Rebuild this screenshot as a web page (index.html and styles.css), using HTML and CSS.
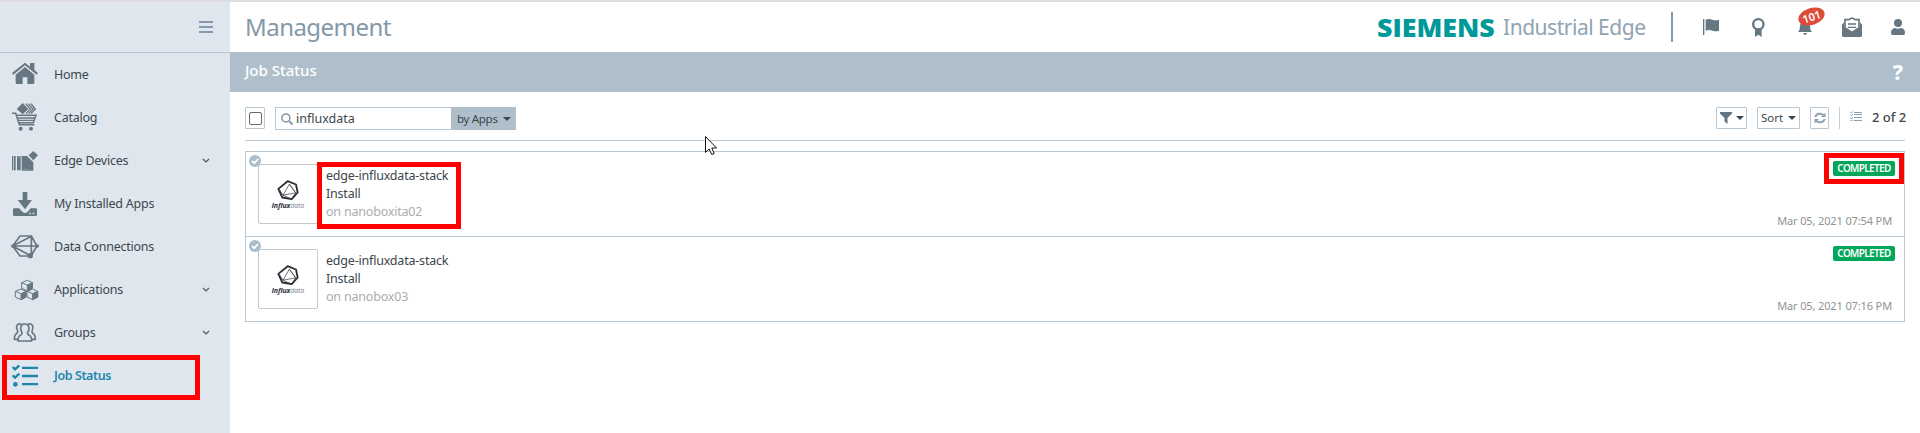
FILE: index.html
```html
<!DOCTYPE html>
<html lang="en">
<head>
<meta charset="utf-8">
<title>Industrial Edge Management</title>
<link rel="stylesheet" href="styles.css">
</head>
<body>
<svg class="defs" width="0" height="0" aria-hidden="true">
  <symbol id="chevron" viewBox="0 0 8 6"><path d="M1 1l3 3 3-3" fill="none" stroke="#4c5a64" stroke-width="1.2"/></symbol>
  <symbol id="caret" viewBox="0 0 8 4"><path d="M0 0h8L4 4z"/></symbol>
  <symbol id="done" viewBox="0 0 12 12"><circle cx="6" cy="6" r="6" fill="#a9bdca"/><path d="M3 6l2.200 2.200L9.200 4" fill="none" stroke="#fff" stroke-width="1.800"/></symbol>
  <symbol id="influx" viewBox="58 44 66 62">
    <g fill="none" stroke="#2d2d38" stroke-linejoin="round">
      <path stroke-width="5.500" d="M90 47l25 10 5 24-18 20-28-5-12-26z"/>
      <path stroke-width="2" d="M95 56L76 89l38-7zM76 89l26 12 12-19-19-26M66 73l10 16"/>
    </g>
  </symbol>
</svg>
<div class="app">
  <aside class="sidebar">
    <div class="sidebar-top"><svg class="burger" viewBox="0 0 14 12"><path d="M0 1h14M0 6h14M0 11h14" stroke="#8499ae" stroke-width="2"/></svg></div>
    <nav>
      <a class="nav-item"><svg viewBox="30 159 96 129"><path d="M36 219l39-31 15 12v-11h13v21l11 9-4 5-35-28-35 28z"/><path d="M47 224l28-23 28 23v24q0 4-4 4H82v-20H68v20H51q-4 0-4-4z"/></svg><span>Home</span></a>
      <a class="nav-item"><svg viewBox="30 288 96 129"><path d="M50 327l18-18 17 18-17 16z"/><g fill="none" stroke="#677782"><path stroke-width="4" d="M77 311l14 16-13 14M85 311l14 16-13 14M93 311l13 16-13 14"/><path stroke-width="4.500" d="M36 340h11l11 34h45M50 346h58l-8 22H58"/><path stroke-width="4" d="M53 354h52M56 361h46"/></g><circle cx="62" cy="386" r="6"/><circle cx="93" cy="386" r="6"/></svg><span>Catalog</span></a>
      <a class="nav-item"><svg viewBox="30 417 96 129"><path d="M36 468h4v43h-4zM42 468h5v43h-5zM51 468h11v43H51zM65 468h16l19 19v25H65zM86 466l14-13 14 13-14 15z"/><path stroke="#dfe6ee" stroke-width="1.500" d="M70 508h3M75 508h3M80 508h3M54 471h6"/></svg><span>Edge Devices</span><svg class="chev"><use href="#chevron"/></svg></a>
      <a class="nav-item"><svg viewBox="30 546 96 129"><path d="M68 576h14v24h14l-21 28-22-28h15z"/><path d="M42 625h16q10 14 17 14t17-14h16q3 0 3 3v17q0 3-3 3H42q-3 0-3-3v-17q0-3 3-3z"/><path fill="#dfe6ee" d="M88 638h5v5h-5zM98 638h5v5h-5z"/></svg><span>My Installed Apps</span></a>
      <a class="nav-item"><svg viewBox="30 30 96 129"><g fill="none" stroke="#677782" stroke-width="5"><path d="M38 93l22-30h34l17 30-18 30H60zM38 93l56-29v58M38 93h73M38 93l55 30"/></g><circle cx="38" cy="93" r="5"/><circle cx="112" cy="93" r="5"/><circle cx="91" cy="122" r="8"/></svg><span>Data Connections</span></a>
      <a class="nav-item"><svg viewBox="30 159 96 129"><g stroke="#677782" stroke-width="3" stroke-linejoin="round"><path fill="#dfe6ee" d="M65 203l17-7 15 7v17l-15 8-17-8zM46 229l17-7 15 7v17l-15 8-17-8zM81 229l17-7 15 7v17l-15 8-17-8z"/><path d="M82 210l15-7v17l-15 8zM63 236l15-7v17l-15 8zM98 236l15-7v17l-15 8z"/><path fill="none" d="M65 203l17 7M46 229l17 7M81 229l17 7"/></g></svg><span>Applications</span><svg class="chev"><use href="#chevron"/></svg></a>
      <a class="nav-item"><svg viewBox="30 288 96 129"><g fill="none" stroke="#677782" stroke-width="5" stroke-linejoin="round"><path d="M64 328q-8-4-13 3-3 6 1 14 3 6-1 10-8 4-8 18h11M84 328q8-4 13 3 4 6 0 14-3 6 1 10 8 4 8 18H95"/><path d="M74 327q-12 0-12 13 0 7 4 12 1 6-4 9-8 3-8 17h41q0-14-8-17-6-3-4-9 4-5 4-12 0-13-13-13z"/></g></svg><span>Groups</span><svg class="chev"><use href="#chevron"/></svg></a>
      <a class="nav-item active"><svg viewBox="30 417 96 129"><path fill="none" stroke="#1f86ab" stroke-width="7" d="M66 458.500h48M66 483h48M66 507.500h48M38 456l7 7 13-12M38 481l7 7 13-12"/><circle cx="46" cy="508" r="7" fill="#1f86ab"/></svg><span>Job Status</span><i class="mark mark-nav"></i></a>
    </nav>
  </aside>
  <main class="main">
    <header class="header">
      <h1 class="title">Management</h1>
      <div class="brand"><b class="siemens">SIEMENS</b><span class="product">Industrial Edge</span></div>
      <div class="tools">
        <svg width="40" viewBox="165 6 120 150"><path d="M189 57h4v48h-4zM197 59q10-4 20 0t20 0v33q-10 4-20 0t-20 0z"/></svg>
        <svg width="50" viewBox="285 6 150 150"><circle cx="355" cy="73" r="15.500" fill="none" stroke="#677782" stroke-width="7"/><path d="M345 86h20v25l-10-7-10 7z"/></svg>
        <div class="bell"><svg width="50" viewBox="435 6 150 150"><path d="M474 96q6-5 6-17 0-16 15-17 15 1 15 17 0 12 6 17zM490 99h11q-1 6-5.500 6t-5.500-6z"/></svg><span class="count">101</span></div>
        <svg width="45" viewBox="585 6 135 150"><path d="M606 74l6-7v14l24 17 24-17V67l6 7v33q0 4-4 4h-52q-4 0-4-4z"/><path fill="#fff" stroke="#677782" stroke-width="5" d="M615 83V59h12q9-9 18 0h12v24l-21 14z"/><path stroke="#677782" stroke-width="4" d="M624 72h24M624 82h24"/></svg>
        <svg width="40" viewBox="720 6 120 150"><circle cx="774" cy="69" r="12"/><path d="M753 100q0-15 12-16 9 5 18 0 12 1 12 16 0 5-5 5h-32q-5 0-5-5z"/></svg>
      </div>
    </header>
    <div class="pagebar"><h2>Job Status</h2><span class="help">?</span></div>
    <div class="content">
      <div class="toolbar">
        <label class="selall"><i class="box"></i></label>
        <div class="search">
          <svg width="12" height="12" viewBox="0 0 12 12"><circle cx="4.900" cy="4.900" r="4" fill="none" stroke="#8297a8" stroke-width="1.500"/><path d="M8 8l3.500 3.500" stroke="#8297a8" stroke-width="2"/></svg>
          <span class="query">influxdata</span>
          <div class="by"><span>by Apps</span><svg class="caret"><use href="#caret"/></svg></div>
        </div>
        <div class="right">
          <div class="btn filter"><svg width="12" height="12" viewBox="0 0 12 12"><path fill="#607584" d="M0 0h12v1.500L7.500 6v6L4.500 9.500V6L0 1.500z"/></svg><svg class="caret"><use href="#caret"/></svg></div>
          <div class="btn sort"><span>Sort</span><svg class="caret"><use href="#caret"/></svg></div>
          <div class="btn refresh"><svg width="12" height="12" viewBox="0 0 12 12"><path fill="none" stroke="#8ba0b0" stroke-width="2" d="M1.200 5a5 4.600 0 0 1 8.300-2M10.800 7a5 4.600 0 0 1-8.300 2"/><path fill="#8ba0b0" d="M11.500.5V5H7zM.5 11.500V7H5z"/></svg></div>
          <i class="sep"></i>
          <svg class="lines" viewBox="0 0 36 30"><path fill="none" stroke="#8ba0b0" stroke-width="3" d="M12 4.500h24M12 10.500h24M12 19.500h24M12 28.500h24M1 3l3 3 5-5M1 11l3 3 5-5M1 20l3 3 5-5M1 28h7"/></svg>
          <span class="total">2 of 2</span>
        </div>
      </div>
      <section class="jobs">
        <article class="job">
          <svg class="done"><use href="#done"/></svg>
          <div class="thumb"><svg class="logo"><use href="#influx"/></svg><div class="logotype"><b>influx</b>data</div></div>
          <div class="info"><div>edge-influxdata-stack</div><div>Install</div><div class="dev">on nanoboxita02</div></div>
          <div class="state"><span class="badge">COMPLETED</span><time>Mar 05, 2021 07:54 PM</time></div>
          <i class="mark mark-info"></i><i class="mark mark-badge"></i>
        </article>
        <article class="job">
          <svg class="done"><use href="#done"/></svg>
          <div class="thumb"><svg class="logo"><use href="#influx"/></svg><div class="logotype"><b>influx</b>data</div></div>
          <div class="info"><div>edge-influxdata-stack</div><div>Install</div><div class="dev">on nanobox03</div></div>
          <div class="state"><span class="badge">COMPLETED</span><time>Mar 05, 2021 07:16 PM</time></div>
        </article>
      </section>
    </div>
  </main>
  <svg class="cursor" viewBox="0 0 12 19"><path d="M.5.500v16l3.700-3.500 2.500 5.500 2.500-1-2.400-5.500h4.700z" fill="#fff" stroke="#111" stroke-width="1"/></svg>
</div>
</body>
</html>
```

FILE: styles.css
```css
* { box-sizing: border-box; }
body { margin: 0; font-family: "Noto Sans", "Open Sans", sans-serif; color: #3c464c; background: #fff; }
h1, h2 { margin: 0; font-weight: 400; }
svg { flex: none; display: block; fill: #677782; }
.defs { position: absolute; }
.app { position: relative; display: flex; width: 1920px; height: 433px; border-top: 2px solid #dcdce1; overflow: hidden; }

.sidebar { width: 230px; background: #dfe6ee; }
.sidebar-top { height: 51px; border-bottom: 1px solid #b4c8d4; display: flex; justify-content: flex-end; padding: 19px 17px 0 0; }
.burger { width: 14px; height: 12px; }
.nav-item { position: relative; display: flex; align-items: center; height: 43px; padding-left: 10px; font-size: 12.5px; letter-spacing: -0.24px; white-space: nowrap; }
.nav-item > svg:first-child { width: 32px; height: 43px; margin-right: 12px; }
.nav-item .chev { width: 8px; height: 6px; margin: 0 20px 0 auto; }
.nav-item.active { color: #1f86ab; font-weight: 600; letter-spacing: -0.42px; }

.mark { position: absolute; border: 5px solid #f00; }
.mark-nav { left: 2px; top: 1px; width: 198px; height: 45px; }
.mark-info { left: 71px; top: 10px; width: 144px; height: 67px; }
.mark-badge { right: 0; top: 1px; width: 80px; height: 31px; }

.main { flex: 1; }
.header { display: flex; align-items: center; height: 50px; padding-left: 15px; white-space: nowrap; }
.title { font-size: 24px; letter-spacing: -0.54px; color: #8399a9; line-height: 50px; }
.brand { display: flex; align-items: center; height: 30px; margin-left: auto; padding-right: 26px; border-right: 2px solid #8399a9; }
.siemens { width: 126px; color: #009999; font: 800 25px/30px "Open Sans", sans-serif; transform: scaleX(1.07); transform-origin: left; }
.product { width: 142px; color: #8fa3b3; font-size: 21px; letter-spacing: -0.48px; line-height: 30px; }
.tools { display: flex; margin-left: 22px; }
.tools svg { height: 50px; }
.bell { position: relative; }
.count { position: absolute; left: 13px; top: 6px; width: 27px; height: 17px; border-radius: 50%; background: #dd4b39; color: #fff; font-weight: 600; font-size: 11px; line-height: 17px; text-align: center; transform: rotate(-18deg); }

.pagebar { display: flex; justify-content: space-between; height: 40px; padding: 0 17px 0 15px; background: #aebfcb; color: #fff; }
.pagebar h2 { font-size: 15px; font-weight: 500; line-height: 37px; }
.help { font-size: 21px; font-weight: 800; line-height: 41px; }

.content { padding: 15px 15px 0; }
.toolbar { display: flex; height: 34px; border-bottom: 1px solid #b7c8d4; white-space: nowrap; }
.selall { width: 20px; height: 22px; border: 1px solid #b7c8d4; border-radius: 1px; display: flex; align-items: center; justify-content: center; }
.box { width: 13px; height: 13px; border: 1px solid #6b6b6b; border-radius: 2px; }
.search { display: flex; align-items: center; width: 241px; height: 23px; margin-left: 10px; padding-left: 5px; border: 1px solid #b7c8d4; border-right: 0; }
.query { margin-left: 3px; font-size: 12.5px; }
.by { display: flex; align-items: center; width: 65px; height: 23px; margin-left: auto; padding-left: 6px; background: #aebfcb; font-size: 11.5px; letter-spacing: -0.3px; }
.caret { width: 8px; height: 4px; fill: #3c464c; margin-left: 5px; }
.right { display: flex; margin-left: auto; }
.btn { display: flex; align-items: center; height: 22px; border: 1px solid #b7c8d4; border-radius: 1px; margin-right: 10px; font-size: 11.5px; line-height: 18px; }
.btn span { padding-bottom: 1px; }
.filter { width: 31px; padding-left: 3px; }
.filter .caret { margin-left: 4px; }
.sort { width: 43px; padding-left: 3px; }
.refresh { width: 19px; justify-content: center; margin-right: 10px; }
.sep { width: 1px; height: 22px; background: #c6ced4; }
.lines { width: 12px; height: 10px; margin: 4px 10px 0; }
.total { width: 33px; font-size: 13px; font-weight: 500; line-height: 21px; }

.jobs { margin-top: 10px; border: 1px solid #b7c8d4; }
.job { position: relative; display: flex; height: 84px; padding: 12px 9px 0 12px; }
.job + .job { height: 85px; border-top: 1px solid #b7c8d4; }
.done { position: absolute; left: 3px; top: 3px; width: 12px; height: 12px; }
.thumb { width: 60px; height: 60px; border: 1px solid #c4c8cb; border-radius: 2px; display: flex; flex-direction: column; align-items: center; padding-top: 15px; }
.logo { width: 22px; height: 21px; }
.logotype { font-size: 7px; line-height: 10px; font-style: italic; letter-spacing: -0.1px; color: #8b8b94; white-space: nowrap; }
.logotype b { color: #2d2d38; }
.info { margin-left: 8px; padding-top: 3px; font-size: 12.5px; letter-spacing: -0.2px; line-height: 18px; white-space: nowrap; }
.dev { color: #a9adb0; }
.state { display: flex; flex-direction: column; align-items: flex-end; margin: -3px 0 0 auto; white-space: nowrap; }
.badge { width: 62px; height: 15px; border-radius: 2px; background: #00a65a; color: #fff; font-size: 10px; font-weight: 600; letter-spacing: -0.65px; line-height: 15px; text-align: center; }
.state time { margin: 36px 3px 0 0; color: #8e9396; font-size: 11px; letter-spacing: -0.13px; line-height: 18px; }

.cursor { position: absolute; left: 705px; top: 134px; width: 12px; height: 19px; }
```
